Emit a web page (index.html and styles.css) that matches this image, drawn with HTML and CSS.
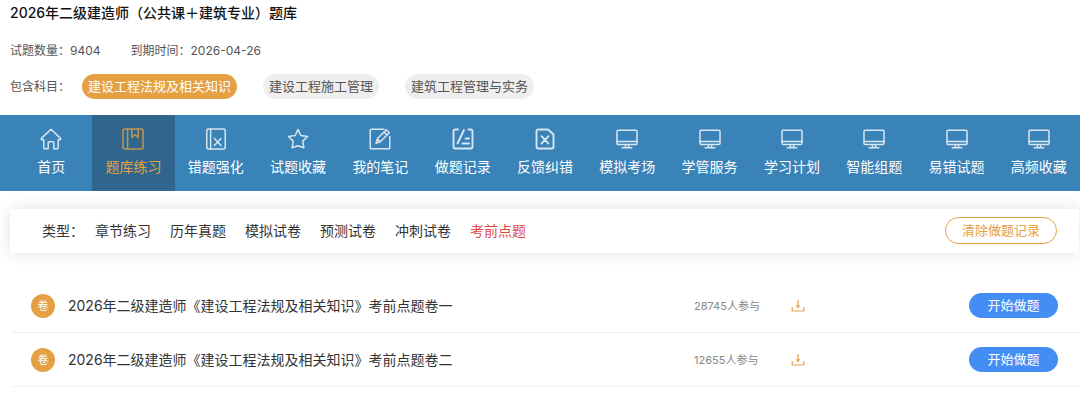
FILE: index.html
```html
<!DOCTYPE html>
<html lang="zh-CN">
<head>
<meta charset="utf-8">
<meta name="viewport" content="width=device-width, initial-scale=1">
<title>2026年二级建造师（公共课＋建筑专业）题库</title>
<link rel="stylesheet" href="styles.css">
</head>
<body>
<svg class="sprite" aria-hidden="true">
  <symbol id="i-monitor" viewBox="0 0 22 22">
    <rect x="1" y="2.2" width="20" height="14.4" rx="1"/>
    <path d="M1 13.4h20M9.4 17v2.4M12.6 17v2.4M6.2 19.8h9.6"/>
  </symbol>
  <symbol id="i-download" viewBox="0 0 14 14">
    <path d="M7 1v7.4M1.2 8v4h11.6V8"/>
    <path class="fill" d="M4.6 6.2h4.8L7 9.2z"/>
  </symbol>
</svg>

<header class="intro">
  <h1 class="title">2026年二级建造师（公共课＋建筑专业）题库</h1>
  <div class="meta">
    <span>试题数量：9404</span>
    <span>到期时间：2026-04-26</span>
  </div>
  <div class="subjects">
    <span class="subjects-label">包含科目：</span>
    <div class="tags">
      <button type="button" class="tag tag-active">建设工程法规及相关知识</button>
      <button type="button" class="tag">建设工程施工管理</button>
      <button type="button" class="tag">建筑工程管理与实务</button>
    </div>
  </div>
</header>

<nav class="nav">
  <a class="nav-item" href="#"><svg class="icon" viewBox="0 0 22 22"><path d="M11 1.2 20.6 10.4c.5.6.2 1.3-.6 1.3h-1.8v8c0 .7-.4 1.1-1.1 1.1h-3.3v-6.2c0-.6-.3-.9-.9-.9H9.1c-.6 0-.9.3-.9.9v6.2H4.9c-.7 0-1.1-.4-1.1-1.1v-8H2c-.8 0-1.1-.7-.6-1.3z"/></svg>首页</a>
  <a class="nav-item nav-active" href="#" aria-current="page"><svg class="icon" viewBox="0 0 22 22"><rect x="1" y="1" width="20" height="20" rx="2"/><path d="M5.6 1v20M9.8 1v8.4l3.2-2.8 3.2 2.8V1"/></svg>题库练习</a>
  <a class="nav-item" href="#"><svg class="icon" viewBox="0 0 22 22"><rect x="1.8" y="1" width="18.4" height="20" rx="1.5"/><path d="M5.6 1v20M9.4 10.5l6.6 7M16 10.5l-6.600 7"/></svg>错题强化</a>
  <a class="nav-item" href="#"><svg class="icon" viewBox="0 0 22 22"><path d="m11 1.5 2.9 6.1 6.7.9-4.9 4.6 1.2 6.7-5.9-2-5.9 2 1.2-6.7-4.9-4.6 6.7-.9z"/></svg>试题收藏</a>
  <a class="nav-item" href="#"><svg class="icon" viewBox="0 0 22 22"><path d="M15 1.2H2.2c-.6 0-1 .4-1 1v17.6c0 .6.4 1 1 1h17.6c.6 0 1-.4 1-1V8.500M7 15.200l1.300-4.400 9-9 3 2.900-9 9zM15 4l3 3M8.300 10.800l3 2.900"/></svg>我的笔记</a>
  <a class="nav-item" href="#"><svg class="icon icon-bold" viewBox="0 0 22 22"><path d="M6 1.500H3.200c-1 0-1.700.7-1.700 1.700v15.600c0 1 .7 1.700 1.700 1.700h15.600c1 0 1.700-.7 1.700-1.700V3.200c0-1-.7-1.700-1.700-1.700H16.500M12 2 5.500 15.500M13.500 10.500H17M10.500 15.500H17"/></svg>做题记录</a>
  <a class="nav-item" href="#"><svg class="icon icon-bold" viewBox="0 0 22 22"><path d="M4.200 1.500h9.800l5.500 5v12.300c0 1-.7 1.700-1.700 1.700H4.200c-1 0-1.700-.7-1.700-1.700V3.200c0-1 .7-1.700 1.700-1.700zM7.500 8.200l7 7.400M14.500 8.200l-7 7.400"/></svg>反馈纠错</a>
  <a class="nav-item" href="#"><svg class="icon"><use href="#i-monitor"/></svg>模拟考场</a>
  <a class="nav-item" href="#"><svg class="icon"><use href="#i-monitor"/></svg>学管服务</a>
  <a class="nav-item" href="#"><svg class="icon"><use href="#i-monitor"/></svg>学习计划</a>
  <a class="nav-item" href="#"><svg class="icon"><use href="#i-monitor"/></svg>智能组题</a>
  <a class="nav-item" href="#"><svg class="icon"><use href="#i-monitor"/></svg>易错试题</a>
  <a class="nav-item" href="#"><svg class="icon"><use href="#i-monitor"/></svg>高频收藏</a>
</nav>

<section class="filter">
  <span class="filter-label">类型：</span>
  <div class="filter-options">
    <a href="#">章节练习</a>
    <a href="#">历年真题</a>
    <a href="#">模拟试卷</a>
    <a href="#">预测试卷</a>
    <a href="#">冲刺试卷</a>
    <a class="filter-active" href="#">考前点题</a>
  </div>
  <button type="button" class="clear">清除做题记录</button>
</section>

<ul class="papers">
  <li class="paper">
    <span class="badge">卷</span>
    <span class="paper-name">2026年二级建造师《建设工程法规及相关知识》考前点题卷一</span>
    <span class="count">28745人参与</span>
    <a class="download" href="#" aria-label="下载"><svg class="icon-download"><use href="#i-download"/></svg></a>
    <button type="button" class="start">开始做题</button>
  </li>
  <li class="paper">
    <span class="badge">卷</span>
    <span class="paper-name">2026年二级建造师《建设工程法规及相关知识》考前点题卷二</span>
    <span class="count">12655人参与</span>
    <a class="download" href="#" aria-label="下载"><svg class="icon-download"><use href="#i-download"/></svg></a>
    <button type="button" class="start">开始做题</button>
  </li>
</ul>
</body>
</html>
```
FILE: styles.css
```css
* { box-sizing: border-box; }

body {
  margin: 0;
  background: #fff;
  color: #333;
  font-family: Inter, "Noto Sans CJK SC", sans-serif;
  font-size: 14px;
  line-height: 20px;
}

a { color: inherit; text-decoration: none; }

button {
  border: 0;
  font: inherit;
  font-size: 13px;
  white-space: nowrap;
  cursor: pointer;
}

.sprite { display: none; }

.intro { padding: 3px 10px 16px; }

.title {
  margin: 0;
  color: #111;
  font-size: 14px;
  font-weight: 500;
  line-height: 20px;
}

.meta {
  display: flex;
  flex-wrap: wrap;
  gap: 0 30px;
  margin-top: 18px;
  color: #555;
  font-size: 12px;
}

.subjects {
  display: flex;
  gap: 12px;
  margin-top: 13px;
  color: #555;
  font-size: 12px;
  line-height: 25px;
}

.subjects-label { flex: none; }

.tags {
  display: flex;
  flex-wrap: wrap;
  gap: 8px 26px;
}

.tag {
  padding: 0 6px;
  border-radius: 13px;
  background: #eee;
  color: #555;
  line-height: 25px;
}

.tag-active { background: #e6a044; color: #fff; }

.nav {
  display: grid;
  grid-template-columns: repeat(13, 1fr);
  padding-left: 10px;
  background: #3a83b8;
  color: #fff;
}

.nav-item {
  display: flex;
  flex-direction: column;
  align-items: center;
  gap: 7px;
  padding: 13px 0 14px;
  white-space: nowrap;
}

.nav-active { background: #30668e; color: #e6a044; }

.icon {
  width: 22px;
  height: 22px;
  fill: none;
  stroke: currentColor;
  stroke-width: 1.5;
  stroke-linejoin: round;
  stroke-linecap: round;
  opacity: 0.8;
}

.icon-bold { stroke-width: 1.9; }

.filter {
  display: flex;
  align-items: center;
  gap: 11px;
  margin: 18px 1px 0 10px;
  padding: 8px 22px 9px 32px;
  background: #fff;
  box-shadow: 0 0 16px rgba(0, 0, 0, 0.12);
}

.filter-label { flex: none; }

.filter-options {
  display: flex;
  flex: 1;
  flex-wrap: wrap;
  gap: 4px 19px;
}

.filter-active { color: #e04848; }

.clear {
  padding: 0 16px;
  border: 1px solid #e6a044;
  border-radius: 14px;
  background: #fff;
  color: #e6a044;
  line-height: 25px;
}

.papers {
  margin: 26px 0 0 12px;
  padding: 0;
  list-style: none;
}

.paper {
  display: grid;
  grid-template-columns: 24px 1fr 97px 178px 89px;
  align-items: center;
  padding: 14px 22px 14px 19px;
  border-bottom: 1px solid #f0f0f0;
}

.badge {
  border-radius: 50%;
  background: #e6a044;
  color: #fff;
  font-size: 11px;
  line-height: 24px;
  text-align: center;
}

.paper-name { padding-left: 13px; }

.count { color: #888; font-size: 11px; }

.download { display: flex; }

.icon-download {
  width: 14px;
  height: 14px;
  fill: none;
  stroke: #e6a044;
  stroke-width: 1.2;
}

.fill { fill: #e6a044; stroke: none; }

.start {
  padding: 0;
  border-radius: 13px;
  background: #448df5;
  color: #fff;
  line-height: 25px;
}
```
